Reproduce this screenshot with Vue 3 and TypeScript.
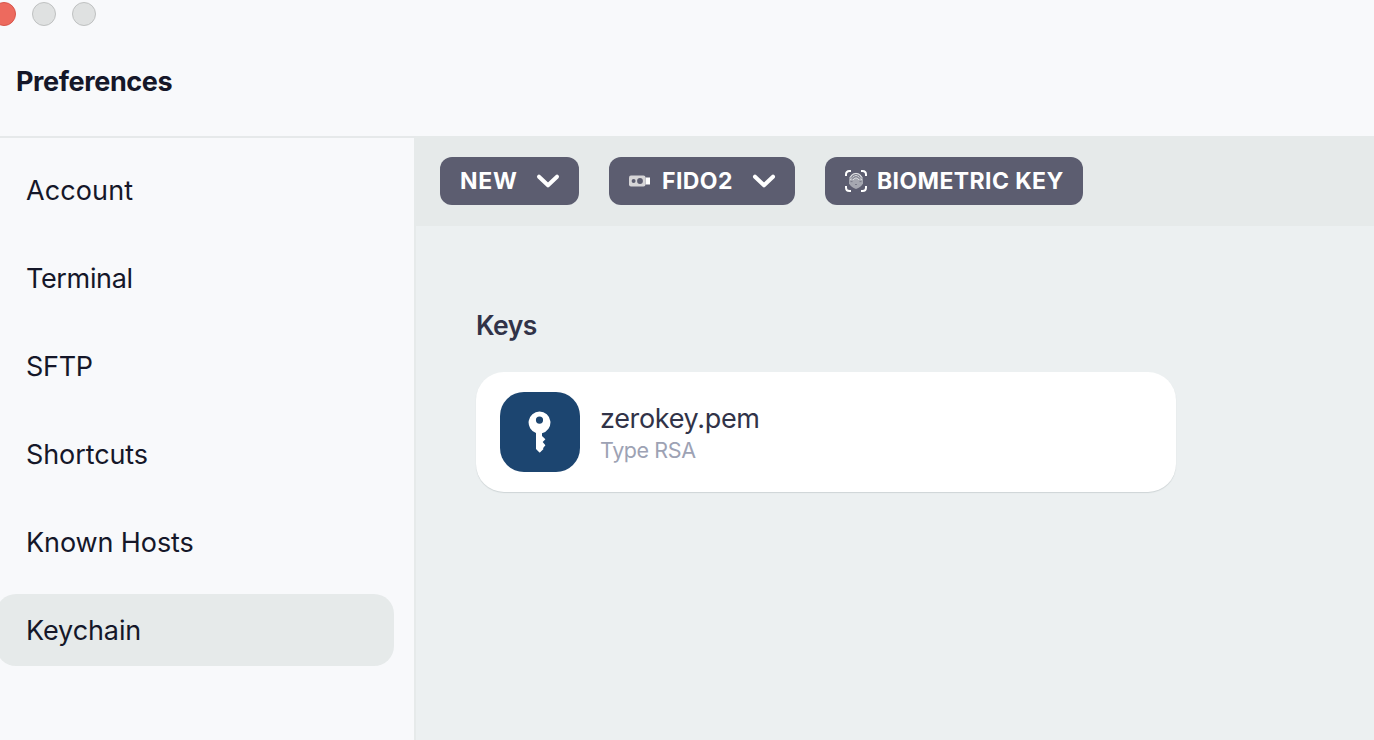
<script setup lang="ts">
import { ref } from 'vue'

interface NavItem {
  id: string
  label: string
}

const items: NavItem[] = [
  { id: 'account', label: 'Account' },
  { id: 'terminal', label: 'Terminal' },
  { id: 'sftp', label: 'SFTP' },
  { id: 'shortcuts', label: 'Shortcuts' },
  { id: 'hosts', label: 'Known Hosts' },
  { id: 'keychain', label: 'Keychain' },
]
const active = ref('keychain')
</script>

<template>
  <div class="window">
    <header class="titlebar">
      <div class="lights">
        <span class="light close"></span>
        <span class="light"></span>
        <span class="light"></span>
      </div>
      <h1><span>Preferences</span></h1>
    </header>
    <div class="body">
      <nav class="sidebar">
        <button
          v-for="item in items"
          :key="item.id"
          class="item"
          :class="[item.id, { active: item.id === active }]"
          @click="active = item.id"
        >
          <span>{{ item.label }}</span>
        </button>
      </nav>
      <main class="content">
        <div class="toolbar">
          <button class="btn new">
            <span>NEW</span>
            <svg class="chevron" width="24" height="16" viewBox="0 0 24 16">
              <path d="M3 3.700 12 12.300 21 3.700" />
            </svg>
          </button>
          <button class="btn fido">
            <svg class="usb" width="22" height="14" viewBox="0 0 22 14">
              <rect x="0" y="1.5" width="16.5" height="11" rx="2" fill="#d6d5d7" />
              <rect x="16.6" y="3.5" width="4.4" height="7" fill="#fff" />
              <circle cx="4.6" cy="7" r="2" fill="#5c5d70" />
              <circle cx="11" cy="7" r="2.9" fill="#5c5d70" />
            </svg>
            <span>FIDO2</span>
            <svg class="chevron" width="24" height="16" viewBox="0 0 24 16">
              <path d="M3 3.700 12 12.300 21 3.700" />
            </svg>
          </button>
          <button class="btn bio">
            <svg class="finger" width="22" height="22" viewBox="0 0 22 22" fill="none">
              <path
                d="M1 6V4.5Q1 1 4.5 1H6M16 1h1.500Q21 1 21 4.500V6M21 16v1.500Q21 21 17.500 21H16M6 21H4.500Q1 21 1 17.500V16"
                stroke="#fff"
                stroke-width="2"
              />
              <path
                d="M4 9.500Q5 3 11 3t7 6.500v4Q16 17 11 19 6 17 4 13.500Z"
                fill="#a5a7b0"
              />
              <path
                d="M5 7.500Q7 3.300 11 3.300t6 4.200M5.500 10Q7 5.500 11 5.500t5.500 4.500M8 10Q9 7.800 11 7.800T14 10"
                stroke="#e4e5e8"
                stroke-width="1"
              />
              <path
                d="M6 8.600Q8 4.500 11 4.500t5 4.100M7.500 9Q9 6.700 11 6.700T14.500 9M5.500 11.600h2M14.500 11.600h2M10 14.500h2"
                stroke="#6d6e7e"
                stroke-width=".8"
              />
            </svg>
            <span>BIOMETRIC KEY</span>
          </button>
        </div>
        <section class="keys">
          <h2><span>Keys</span></h2>
          <article class="card">
            <div class="tile">
              <svg width="24" height="42" viewBox="0 0 24 42">
                <path
                  fill="#fff"
                  fill-rule="evenodd"
                  d="M11.500 .5A11 11 0 0 1 14 22.200L14 25 17.400 28.300 14.700 31 17.400 34.200 15 37.200 15.500 38 12.200 41.300Q11.700 41.700 11.200 41.300L8 38V21.900A11 11 0 0 1 11.500 .5ZM11.500 5.500a3.600 3.600 0 1 0 0 7.200 3.600 3.600 0 0 0 0-7.200Z"
                />
              </svg>
            </div>
            <div class="info">
              <div class="name"><span>zerokey.pem</span></div>
              <div class="type"><span>Type RSA</span></div>
            </div>
          </article>
        </section>
      </main>
    </div>
  </div>
</template>

<style>
body {
  margin: 0;
  overflow: hidden;
}
</style>

<style scoped>
.window {
  width: 1374px;
  height: 740px;
  overflow: hidden;
  display: flex;
  flex-direction: column;
  background: #f8f9fb;
  color: #151729;
  font-family: Inter, 'Liberation Sans', sans-serif;
}
button {
  border: 0;
  margin: 0;
  font: inherit;
  color: inherit;
  white-space: nowrap;
}
.titlebar {
  height: 136px;
  flex: none;
  box-sizing: border-box;
  padding-top: 2px;
}
.lights {
  display: flex;
  gap: 16px;
  margin-left: -8px;
}
.light {
  width: 24px;
  height: 24px;
  box-sizing: border-box;
  border-radius: 50%;
  background: #dfe1e1;
  border: 1px solid #bfc1c1;
}
.light.close {
  background: #ed6a5e;
  border-color: #d8564b;
}
h1 {
  margin: 36px 0 0 16px;
  font-size: 27px;
  line-height: 40px;
  font-weight: 650;
  letter-spacing: -0.38px;
}
.body {
  flex: 1;
  display: flex;
}
.sidebar {
  width: 416px;
  box-sizing: border-box;
  border-top: 2px solid #e6e9ea;
  border-right: 2px solid #e6eaea;
  padding: 16px 20px 0 0;
  display: flex;
  flex-direction: column;
  gap: 16px;
}
.item {
  height: 72px;
  margin-left: -4px;
  padding: 1px 0 0 30px;
  border-radius: 20px;
  background: transparent;
  text-align: left;
  font-size: 27px;
  letter-spacing: -0.1px;
}
.item.account {
  letter-spacing: 0.1px;
}
.item.terminal {
  letter-spacing: -0.35px;
}
.item.sftp {
  letter-spacing: -0.3px;
}
.item.active {
  background: #e6eaea;
}
.content {
  flex: 1;
  background: #ecf0f1;
}
.toolbar {
  height: 90px;
  box-sizing: border-box;
  padding: 21px 0 0 24px;
  display: flex;
  gap: 30px;
  background: #e6eaea;
}
.btn {
  height: 48px;
  box-sizing: border-box;
  border-radius: 12px;
  background: #5c5d70;
  color: #fff;
  padding: 0 19px 0 20px;
  display: flex;
  align-items: center;
  font-size: 23px;
  font-weight: 650;
  letter-spacing: 0.4px;
}
.new {
  width: 139px;
  letter-spacing: 0.7px;
}
.fido {
  width: 186px;
}
.bio {
  width: 258px;
}
.chevron {
  margin-left: auto;
  flex: none;
}
.chevron path {
  fill: none;
  stroke: #fff;
  stroke-width: 4;
  stroke-linecap: round;
  stroke-linejoin: round;
}
.usb {
  margin-right: 11px;
  flex: none;
}
.finger {
  margin-right: 10px;
  flex: none;
}
.keys {
  padding: 79px 0 0 60px;
}
h2 {
  margin: 0;
  font-size: 26.5px;
  line-height: 40px;
  font-weight: 620;
  letter-spacing: -0.5px;
  color: #313348;
}
.card {
  width: 700px;
  height: 120px;
  margin-top: 27px;
  box-sizing: border-box;
  padding: 20px 24px;
  display: flex;
  gap: 20px;
  border-radius: 28px;
  background: #fff;
  box-shadow: 0 1px 1px rgba(70, 90, 95, 0.18);
}
.tile {
  width: 80px;
  height: 80px;
  border-radius: 24px;
  background: #1c4570;
  display: flex;
  align-items: center;
  justify-content: center;
}
.name {
  margin-top: 9px;
  font-size: 27px;
  line-height: 36px;
  letter-spacing: -0.33px;
  color: #313348;
}
.type {
  font-size: 21.5px;
  line-height: 27px;
  letter-spacing: -0.4px;
  color: #9da2b4;
}
</style>
